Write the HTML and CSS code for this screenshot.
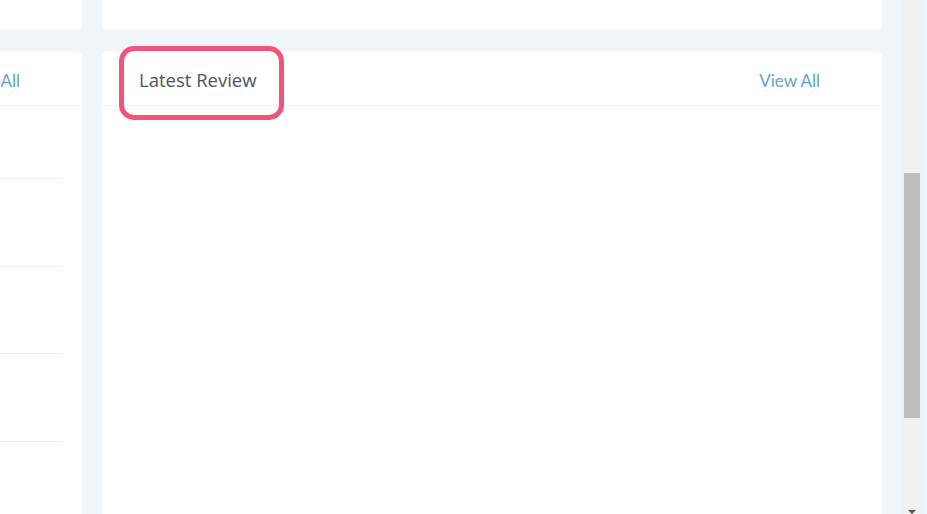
FILE: index.html
```html
<!DOCTYPE html>
<html lang="en">
<head>
    <meta charset="UTF-8">
    <meta name="viewport" content="width=device-width, initial-scale=1.0">
    <title>Dashboard - Latest Review</title>
    <link rel="stylesheet" href="styles.css">
</head>
<body>
    <div class="page">
        <div class="dashboard">
            <div class="col col-left">
                <div class="card card-top"></div>
            </div>
            <div class="col">
                <div class="card card-top"></div>
            </div>

            <div class="col col-left">
                <div class="card card-main">
                    <div class="card-header">
                        <span class="card-title">Top Products</span>
                        <a class="view-all" href="#">View All</a>
                    </div>
                    <ul class="list">
                        <li class="list-item"></li>
                        <li class="list-item"></li>
                        <li class="list-item"></li>
                        <li class="list-item"></li>
                    </ul>
                </div>
            </div>
            <div class="col">
                <div class="card card-main">
                    <div class="card-header">
                        <span class="card-title highlighted">Latest Review</span>
                        <a class="view-all" href="#">View All</a>
                    </div>
                </div>
            </div>
        </div>

        <!-- fake scrollbar of the screenshot -->
        <div class="scrollbar">
            <div class="scroll-thumb"></div>
            <div class="scroll-arrow"></div>
        </div>
    </div>
</body>
</html>
```

FILE: styles.css
```css
* {
    margin: 0;
    padding: 0;
    box-sizing: border-box;
}

html, body {
    height: 100%;
    overflow: hidden;
}

body {
    font-family: 'Open Sans', 'Noto Sans', sans-serif;
    background: #eff5f8;
}

.page {
    display: flex;
    height: 100%;
    padding-right: 5px;
}

.dashboard {
    flex: 1;
    display: grid;
    grid-template-columns: 82px 780px;
    grid-template-rows: 30px 500px;
    column-gap: 20px;
    row-gap: 21px;
}

.col {
    display: flex;
    min-width: 0;
}

.col-left {
    overflow: hidden;
    justify-content: flex-end;
}

.col-left .card {
    flex: 0 0 400px;
}

.card {
    flex: 1;
    background: #ffffff;
}

.card-top {
    border-radius: 0 0 6px 6px;
}

.card-main {
    border-radius: 6px 6px 0 0;
}

.card-header {
    height: 55px;
    display: flex;
    align-items: center;
    justify-content: space-between;
    padding: 4px 62px 0 37px;
    border-bottom: 1px solid #eef2f5;
}

.card-title {
    font-size: 18.5px;
    line-height: 24px;
    color: #4f5256;
    position: relative;
}

.card-title.highlighted::after {
    content: "";
    position: absolute;
    left: -20px;
    right: -27px;
    top: -22px;
    bottom: -28px;
    border: 5px solid #f1537b;
    border-radius: 15px;
}

.view-all {
    font-family: Lato, 'Open Sans', sans-serif;
    font-size: 17px;
    color: #62a3d3;
    text-decoration: none;
}

.list {
    list-style: none;
    padding: 0 19px 0 0;
}

.list-item {
    height: 87.5px;
    border-bottom: 1px solid #e9eef2;
}

.list-item:first-child {
    height: 73px;
}

.scrollbar {
    width: 20px;
    height: 100%;
    background: #f1f1f1;
    position: relative;
}

.scroll-thumb {
    position: absolute;
    left: 2px;
    right: 2px;
    top: 173px;
    height: 245px;
    background: #bdbdbd;
}

.scroll-arrow {
    position: absolute;
    left: 6px;
    bottom: 0;
    width: 0;
    height: 0;
    border-left: 4px solid transparent;
    border-right: 4px solid transparent;
    border-top: 4px solid #555;
}
```
